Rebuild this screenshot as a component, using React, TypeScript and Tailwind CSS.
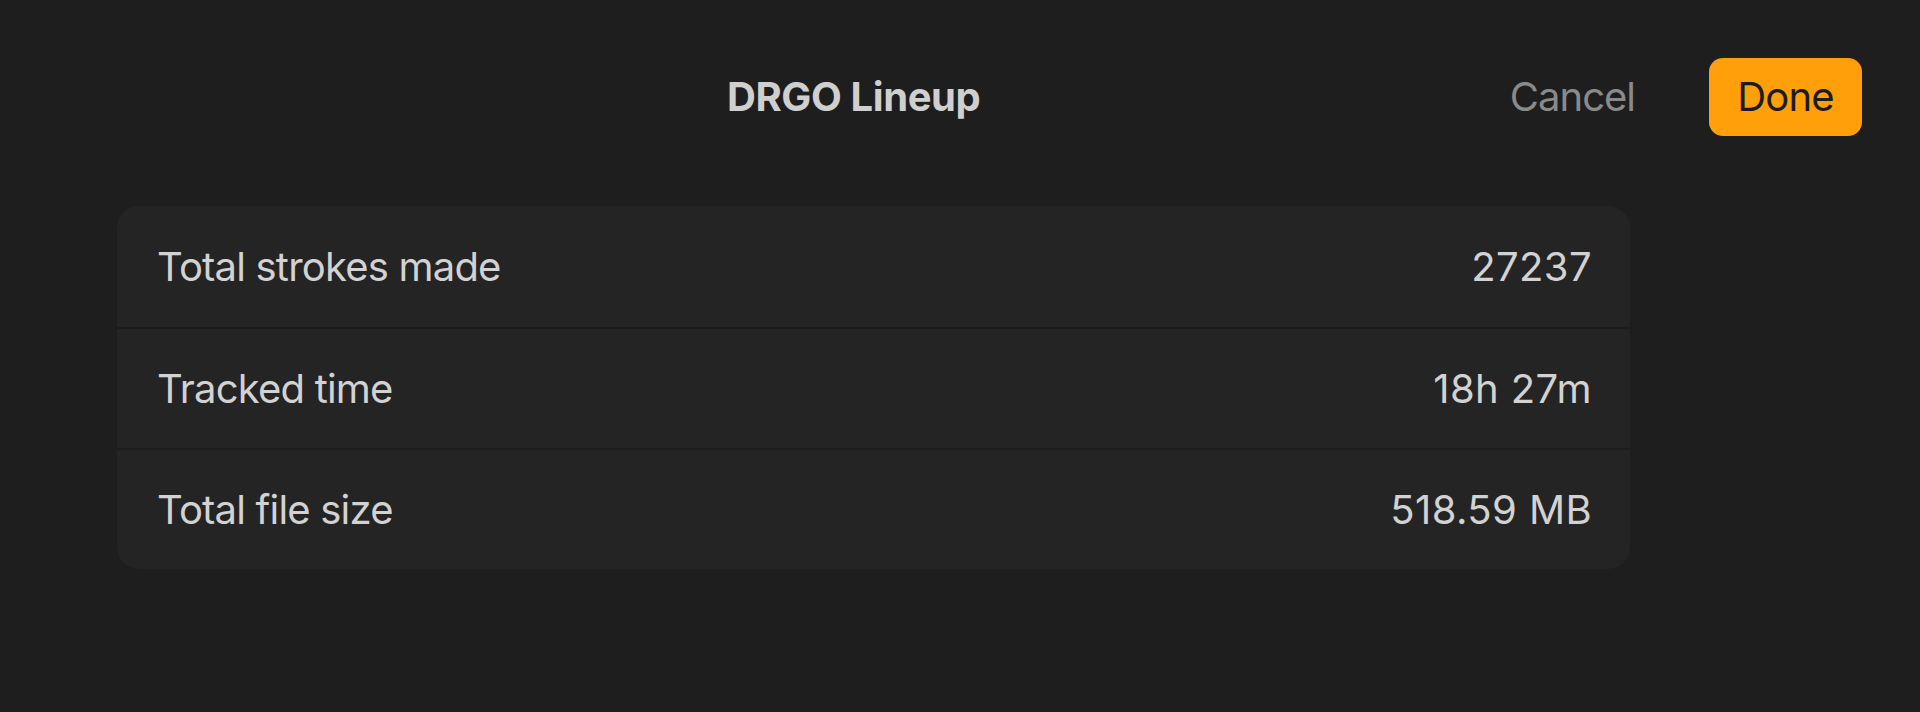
import React from 'react';

interface StatRow {
  label: string;
  value: string;
}

const stats: StatRow[] = [
  { label: 'Total strokes made', value: '27237' },
  { label: 'Tracked time', value: '18h 27m' },
  { label: 'Total file size', value: '518.59 MB' },
];

export default function App() {
  return (
    <div
      className="w-full h-[712px] bg-[#1e1e1e] text-[#d2d2d2]"
      style={{ fontFamily: 'Inter, "Noto Sans", sans-serif' }}
    >
      {/* Header */}
      <div className="flex items-center pt-[58px] pr-[58px]">
        <h1 className="ml-[727px] text-[40px] font-bold tracking-[-0.01em] text-[#cfcfcf] leading-none">
          DRGO Lineup
        </h1>
        <div className="flex-1" />
        <button className="text-[40px] tracking-[-0.025em] text-[#8a8a8a] leading-none mr-[74px]">
          Cancel
        </button>
        <button className="w-[153px] h-[78px] rounded-[14px] bg-[#ff9f0a] text-[40px] tracking-[-0.02em] text-[#1c1c1c] leading-none flex items-center justify-center">
          Done
        </button>
      </div>

      {/* Stats card */}
      <div className="mt-[70px] ml-[117px] w-[1513px] rounded-[22px] bg-[#242424] overflow-hidden">
        {stats.map((row, i) => (
          <div
            key={row.label}
            className={`flex items-center justify-between h-[121px] pl-[40px] pr-[38px] text-[40px] ${
              i > 0 ? 'border-t-2 border-[#1c1c1c]' : ''
            }`}
          >
            <span className="tracking-[-0.02em]">{row.label}</span>
            <span className="tracking-[0.01em]">{row.value}</span>
          </div>
        ))}
      </div>
    </div>
  );
}
